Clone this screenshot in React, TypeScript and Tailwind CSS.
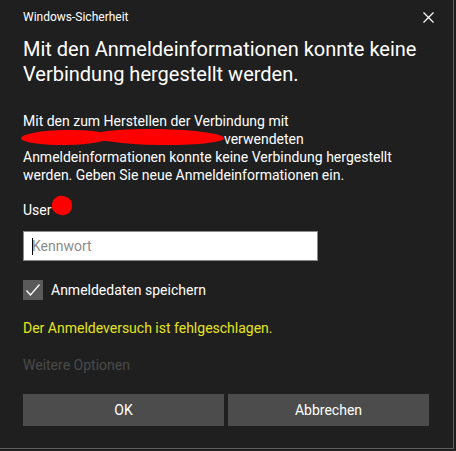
import React from "react";

export default function App() {
  const font = { fontFamily: 'Roboto, "Noto Sans", sans-serif' };
  return (
    <div className="w-[456px] h-[451px] bg-[#1f1f1f]" style={font}>
      <div className="w-[454px] h-[449px] border-r border-b border-[#5e5e5e] bg-[#1f1f1f] flex flex-col">
        <div className="h-[34px] flex items-center justify-between pl-[23px] pr-[18px]">
          <span className="text-[12px] text-white leading-none">Windows-Sicherheit</span>
          <svg width="11" height="11" viewBox="0 0 11 11" className="mr-[1px]">
            <path d="M0.5 0.5 L10.5 10.5 M10.5 0.5 L0.5 10.5" stroke="#ffffff" strokeWidth="1.2" />
          </svg>
        </div>
        <div className="pl-[23px] pr-[20px]">
          <h1 className="text-[20px] leading-[25px] text-white mt-[3px]">
            Mit den Anmeldeinformationen konnte keine Verbindung hergestellt werden.
          </h1>
          <div className="relative mt-[25px] text-[14px] leading-[18px] text-white">
            <p>
              Mit den zum Herstellen der Verbindung mit
              <br />
              <span className="inline-block w-[201px]"></span>verwendeten
              <br />
              Anmeldeinformationen konnte keine Verbindung hergestellt werden. Geben Sie neue Anmeldeinformationen ein.
            </p>
            <div className="absolute left-[-2px] top-[18px] w-[90px] h-[15px] rounded-[50%] bg-[#ff0000] -rotate-1"></div>
            <div className="absolute left-[70px] top-[17px] w-[131px] h-[16px] rounded-[50%] bg-[#ff0000] rotate-1"></div>
          </div>
          <div className="relative mt-[17px] text-[14px] leading-[18px] text-white h-[18px]">
            <span>User</span>
            <div className="absolute left-[29px] top-[-5px] w-[20px] h-[19px] rounded-[45%] bg-[#ff0000] rotate-12"></div>
          </div>
          <div className="mt-[12px] w-[295px] h-[30px] bg-white border border-[#8a8a8a] flex items-center pl-[8px] relative">
            <span className="absolute left-[8px] top-[6px] w-px h-[17px] bg-black"></span>
            <span className="text-[14px] text-[#8c8c8c] leading-none">Kennwort</span>
          </div>
          <div className="mt-[19px] flex items-center h-[20px]">
            <div className="w-[20px] h-[20px] bg-[#5a5a5a] flex items-center justify-center">
              <svg width="16" height="14" viewBox="0 0 16 14">
                <path d="M1.5 7.5 L5.5 12 L14.5 1.5" stroke="#ffffff" strokeWidth="1.3" fill="none" />
              </svg>
            </div>
            <span className="ml-[8px] text-[14px] text-white leading-none">Anmeldedaten speichern</span>
          </div>
          <div className="mt-[19px] text-[14px] leading-[18px] text-[#e5e51c]">
            Der Anmeldeversuch ist fehlgeschlagen.
          </div>
          <div className="mt-[19px] text-[14px] leading-[18px] text-[#4a4a4a]">Weitere Optionen</div>
          <div className="mt-[20px] flex gap-[4px]">
            <button className="w-[201px] h-[32px] bg-[#4c4c4c] text-white text-[14px]">OK</button>
            <button className="w-[201px] h-[32px] bg-[#4c4c4c] text-white text-[14px]">Abbrechen</button>
          </div>
        </div>
      </div>
    </div>
  );
}
